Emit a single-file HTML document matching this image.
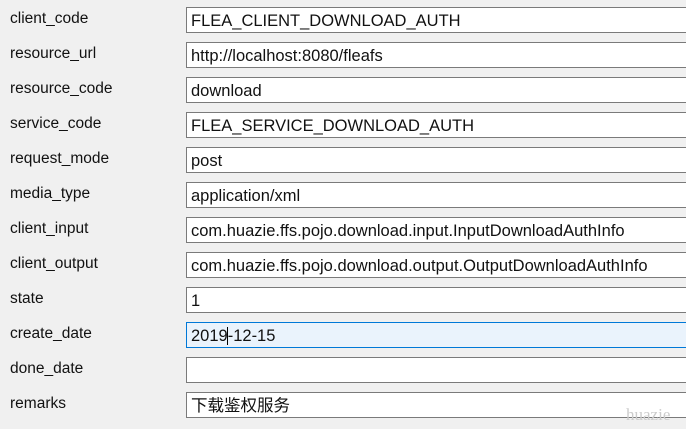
<!DOCTYPE html>
<html><head><meta charset="utf-8"><style>
body{margin:0;width:686px;height:429px;background:#f0f0f0;overflow:hidden;position:relative;font-family:"Liberation Sans","Noto Sans CJK SC",sans-serif;font-size:15.5px;color:#111}
.l{position:absolute;left:10px;height:26px;line-height:26px}
.b{position:absolute;left:186px;width:520px;height:24px;border:1px solid #7a7a7a;background:#fff;line-height:26px;padding-left:4px;box-sizing:content-box;font-size:16.5px}
.f{border-color:#0078d7;background:#eaf3fc}
.w{position:absolute;left:626px;top:405px;font-family:"Liberation Serif",serif;font-size:17px;color:#ccc}
</style></head><body>
<div class="l" style="top:6px">client_code</div><div class="b" style="top:7px">FLEA_CLIENT_DOWNLOAD_AUTH</div>
<div class="l" style="top:41px">resource_url</div><div class="b" style="top:42px">http://localhost:8080/fleafs</div>
<div class="l" style="top:76px">resource_code</div><div class="b" style="top:77px">download</div>
<div class="l" style="top:111px">service_code</div><div class="b" style="top:112px">FLEA_SERVICE_DOWNLOAD_AUTH</div>
<div class="l" style="top:146px">request_mode</div><div class="b" style="top:147px">post</div>
<div class="l" style="top:181px">media_type</div><div class="b" style="top:182px">application/xml</div>
<div class="l" style="top:216px">client_input</div><div class="b" style="top:217px">com.huazie.ffs.pojo.download.input.InputDownloadAuthInfo</div>
<div class="l" style="top:251px">client_output</div><div class="b" style="top:252px">com.huazie.ffs.pojo.download.output.OutputDownloadAuthInfo</div>
<div class="l" style="top:286px">state</div><div class="b" style="top:287px">1</div>
<div class="l" style="top:321px">create_date</div><div class="b f" style="top:322px">2019<span style="border-left:1px solid #000;margin-left:-1px"></span>-12-15</div>
<div class="l" style="top:356px">done_date</div><div class="b" style="top:357px"></div>
<div class="l" style="top:391px">remarks</div><div class="b" style="top:392px">下载鉴权服务</div>
<div class="w">huazie</div>
</body></html>
